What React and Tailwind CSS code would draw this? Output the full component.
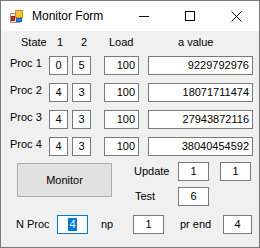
import React from "react";

const font = { fontFamily: '"Liberation Sans", Arial, sans-serif' };

const Box = ({ children, className = "", align = "center" }) => (
	<div
		className={`h-[19px] bg-white border border-[#7a7a7a] flex items-center text-[11px] leading-none text-black ${
			align === "right" ? "justify-end pr-[3px]" : "justify-center"
		} ${className}`}
	>
		{children}
	</div>
);

const rows = [
	{ name: "Proc 1", a: "0", b: "5", load: "100", value: "9229792976" },
	{ name: "Proc 2", a: "4", b: "3", load: "100", value: "18071711474" },
	{ name: "Proc 3", a: "4", b: "3", load: "100", value: "27943872116" },
	{ name: "Proc 4", a: "4", b: "3", load: "100", value: "38040454592" },
];

const AppIcon = () => (
	<svg width="13" height="13" viewBox="0 0 13 13">
		<rect x="0.5" y="3.5" width="9" height="9" fill="#e8e8e8" stroke="#9a9a9a" />
		<rect x="1.5" y="6.5" width="3" height="4" fill="#d33" stroke="#a11" />
		<rect x="5.5" y="0.5" width="7" height="7" fill="#f6c632" stroke="#c49410" />
		<rect x="6.5" y="8.5" width="5" height="3" fill="#3d7de0" stroke="#1f56b0" />
	</svg>
);

const TitleBar = () => (
	<div className="h-[30px] bg-white flex items-center">
		<div className="ml-[9px] mt-[1px]">
			<AppIcon />
		</div>
		<span className="ml-[9px] text-[12px] text-black" style={font}>
			Monitor Form
		</span>
		<div className="ml-auto flex items-center h-full">
			<div className="w-[46px] h-full flex items-center justify-center">
				<div className="w-[10px] h-[1px] bg-black mt-[1px]" />
			</div>
			<div className="w-[46px] h-full flex items-center justify-center">
				<div className="w-[10px] h-[10px] border border-black" />
			</div>
			<div className="w-[46px] h-full flex items-center justify-center">
				<svg width="11" height="11" viewBox="0 0 11 11">
					<path d="M0.5 0.5 L10.5 10.5 M10.5 0.5 L0.5 10.5" stroke="#000" strokeWidth="1" />
				</svg>
			</div>
		</div>
	</div>
);

export default function App() {
	return (
		<div
			className="w-[260px] h-[248px] border border-[#7a7a7a] bg-[#f0f0f0] flex flex-col overflow-hidden"
			style={font}
		>
			<TitleBar />
			<div className="flex flex-col text-[11px] text-black">
				{/* header */}
				<div className="h-[22px] flex items-center">
					<span className="ml-[20px] w-[36px]">State</span>
					<span className="w-[24px]">1</span>
					<span className="w-[28px]">2</span>
					<span className="w-[69px]">Load</span>
					<span>a value</span>
				</div>

				{/* rows */}
				<div className="mt-[3px] flex flex-col gap-[8px]">
					{rows.map(row => (
						<div key={row.name} className="flex items-start">
							<span className="w-[48px] pl-[9px] leading-[15px]">{row.name}</span>
							<Box className="w-[19px]">{row.a}</Box>
							<Box className="w-[19px] ml-[4px]">{row.b}</Box>
							<Box className="w-[35px] ml-[13px]" align="right">
								{row.load}
							</Box>
							<Box className="w-[105px] ml-[9px]" align="right">
								{row.value}
							</Box>
						</div>
					))}
				</div>

				{/* monitor + update/test */}
				<div className="mt-[6px] flex items-start">
					<button
						type="button"
						className="ml-[16px] mt-[1px] w-[95px] h-[34px] bg-[#e1e1e1] border border-[#adadad] text-[11px] text-black"
					>
						Monitor
					</button>
					<div className="ml-[22px] flex flex-col gap-[6px]">
						<div className="flex items-center">
							<span className="w-[44px]">Update</span>
							<Box className="w-[31px]">1</Box>
							<Box className="w-[31px] ml-[11px]">1</Box>
						</div>
						<div className="flex items-center">
							<span className="w-[44px] pl-[1px]">Test</span>
							<Box className="w-[31px]">6</Box>
						</div>
					</div>
				</div>

				{/* bottom row */}
				<div className="mt-[9px] flex items-center">
					<span className="ml-[15px] w-[41px]">N Proc</span>
					<div className="w-[31px] h-[19px] bg-white border border-[#0078d7] flex items-center justify-center">
						<span className="bg-[#0078d7] text-white px-[1px] leading-[13px]">4</span>
					</div>
					<span className="ml-[13px] w-[32px]">np</span>
					<Box className="w-[31px]">1</Box>
					<span className="ml-[16px] w-[43px]">pr end</span>
					<Box className="w-[29px]">4</Box>
				</div>
			</div>
		</div>
	);
}
